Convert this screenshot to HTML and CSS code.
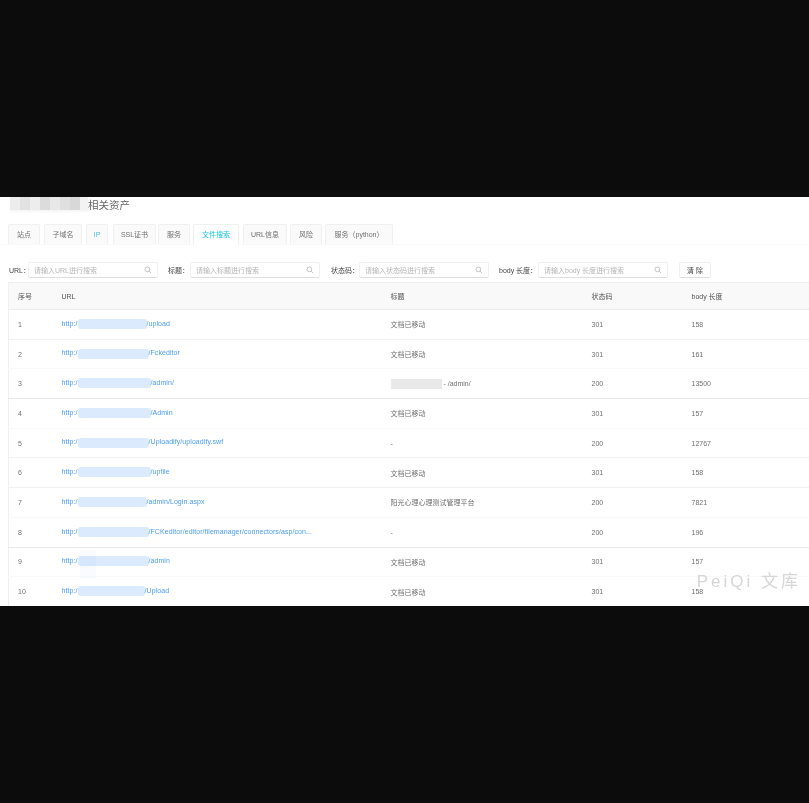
FILE: index.html
```html
<!DOCTYPE html>
<html lang="en">
<head>
    <meta charset="UTF-8">
    <meta name="viewport" content="width=device-width, initial-scale=1.0">
    <title>相关资产</title>
    <link rel="stylesheet" href="styles.css">
</head>
<body>
<div class="page">
    <div class="heading"><span class="mosaic"></span><h2>相关资产</h2></div>

    <div class="tabs">
        <a class="tab w1">站点</a>
        <a class="tab w2">子域名</a>
        <a class="tab w3 tinted">IP</a>
        <a class="tab w4">SSL证书</a>
        <a class="tab w5">服务</a>
        <a class="tab w6 active">文件搜索</a>
        <a class="tab w7">URL信息</a>
        <a class="tab w8">风险</a>
        <a class="tab w9">服务（python）</a>
    </div>

    <form class="filters">
        <label class="lbl-url">URL：</label>
        <div class="search"><input type="text" placeholder="请输入URL进行搜索"><svg viewBox="0 0 10 10"><circle cx="4.2" cy="4.2" r="3"/><path d="M6.4 6.4L9 9"/></svg></div>
        <label class="lbl-title">标题：</label>
        <div class="search"><input type="text" placeholder="请输入标题进行搜索"><svg viewBox="0 0 10 10"><circle cx="4.2" cy="4.2" r="3"/><path d="M6.4 6.4L9 9"/></svg></div>
        <label class="lbl-status">状态码：</label>
        <div class="search"><input type="text" placeholder="请输入状态码进行搜索"><svg viewBox="0 0 10 10"><circle cx="4.2" cy="4.2" r="3"/><path d="M6.4 6.4L9 9"/></svg></div>
        <label class="lbl-body">body 长度：</label>
        <div class="search"><input type="text" placeholder="请输入body 长度进行搜索"><svg viewBox="0 0 10 10"><circle cx="4.2" cy="4.2" r="3"/><path d="M6.4 6.4L9 9"/></svg></div>
        <button type="button">清 除</button>
    </form>

    <table class="assets">
        <colgroup>
            <col class="c-no"><col class="c-url"><col class="c-title"><col class="c-code"><col>
        </colgroup>
        <thead>
            <tr><th>序号</th><th>URL</th><th>标题</th><th>状态码</th><th>body 长度</th></tr>
        </thead>
        <tbody>
            <tr class="line-mid"><td>1</td><td class="link"><a>http:/<i class="blot b69"></i>/upload</a></td><td>文档已移动</td><td>301</td><td>158</td></tr>
            <tr class="line-faint"><td>2</td><td class="link"><a>http:/<i class="blot b71"></i>/Fckeditor</a></td><td>文档已移动</td><td>301</td><td>161</td></tr>
            <tr class="line-dark"><td>3</td><td class="link"><a>http:/<i class="blot b73"></i>/admin/</a></td><td><i class="blot grey"></i> - /admin/</td><td>200</td><td>13500</td></tr>
            <tr class="line-faint"><td>4</td><td class="link"><a>http:/<i class="blot b73"></i>/Admin</a></td><td>文档已移动</td><td>301</td><td>157</td></tr>
            <tr class="line-mid"><td>5</td><td class="link"><a>http:/<i class="blot b71"></i>/Uploadify/uploadify.swf</a></td><td>-</td><td>200</td><td>12767</td></tr>
            <tr class="line-mid"><td>6</td><td class="link"><a>http:/<i class="blot b73"></i>/upfile</a></td><td>文档已移动</td><td>301</td><td>158</td></tr>
            <tr class="line-faint"><td>7</td><td class="link"><a>http:/<i class="blot b69"></i>/admin/Login.aspx</a></td><td>阳光心理心理测试管理平台</td><td>200</td><td>7821</td></tr>
            <tr class="line-dark"><td>8</td><td class="link"><a>http:/<i class="blot b71"></i>/FCKeditor/editor/filemanager/connectors/asp/con...</a></td><td>-</td><td>200</td><td>196</td></tr>
            <tr class="line-faint"><td>9</td><td class="link"><a>http:/<i class="blot b71"></i>/admin</a></td><td>文档已移动</td><td>301</td><td>157</td></tr>
            <tr><td>10</td><td class="link"><a>http:/<i class="blot b67"></i>/Upload</a></td><td>文档已移动</td><td>301</td><td>158</td></tr>
        </tbody>
    </table>

    <div class="ghost"></div>
    <div class="watermark">PeiQi 文库</div>
</div>
</body>
</html>
```

FILE: styles.css
```css
body {
    margin: 0;
    height: 803px;
    background-color: #0c0c0c;
    overflow: hidden;
    font-family: "Liberation Sans", "Noto Sans CJK SC", sans-serif;
    font-size: 7px;
    color: #707070;
}

.page {
    position: relative;
    margin-top: 197px;
    height: 409px;
    background-color: #fff;
    overflow: hidden;
    filter: blur(0.4px);
}

.heading {
    display: flex;
    align-items: flex-start;
    height: 27px;
    padding-left: 10px;
}

.heading h2 {
    margin: 0;
    font-size: 10.5px;
    line-height: 16px;
    font-weight: normal;
    color: #666;
}

.mosaic {
    width: 78px;
    height: 13px;
    background: linear-gradient(90deg, #ececec 0 10px, #e2e2e2 10px 20px, #ededed 20px 30px, #dcdcdc 30px 40px, #e8e8e8 40px 50px, #e0e0e0 50px 60px, #d8d8d8 60px 70px, #f3f3f3 70px);
    box-shadow: 0 2px 2px #f6f6f6;
}

.tabs {
    display: flex;
    height: 20px;
    padding-left: 8px;
    border-bottom: 1px solid #f8f8f8;
}

.tab {
    box-sizing: border-box;
    height: 20px;
    line-height: 19px;
    text-align: center;
    background-color: #fafafa;
    border: 1px solid #f0f0f0;
    border-bottom: none;
    border-radius: 2px 2px 0 0;
}

.w1 { width: 32px; margin-right: 4px; }
.w2 { width: 38px; margin-right: 4px; }
.w3 { width: 22px; margin-right: 5px; }
.w4 { width: 43px; margin-right: 2px; }
.w5 { width: 32px; margin-right: 3px; }
.w6 { width: 46px; margin-right: 4px; }
.w7 { width: 44px; margin-right: 3px; }
.w8 { width: 32px; margin-right: 3px; }
.w9 { width: 68px; }

.tab.tinted { color: #4cc3d9; }

.tab.active {
    height: 21px;
    color: #19c5e0;
    background-color: #fff;
}

.filters {
    display: flex;
    align-items: center;
    height: 16px;
    margin-top: 17px;
    padding-left: 9px;
}

.filters label {
    color: #444;
    white-space: nowrap;
}

.lbl-url { width: 19px; }
.lbl-title { width: 22px; margin-left: 10px; }
.lbl-status { width: 28px; margin-left: 11px; }
.lbl-body { width: 39px; margin-left: 10px; }

.search {
    position: relative;
    box-sizing: border-box;
    width: 130px;
    height: 16px;
    border: 1px solid #f0f0f0;
    border-bottom-color: #dedede;
    border-radius: 2px;
}

.search input {
    width: 100%;
    height: 100%;
    box-sizing: border-box;
    padding: 0 18px 0 5px;
    border: none;
    outline: none;
    background: transparent;
    font: inherit;
}

.search input::placeholder {
    color: #b5b5b5;
}

.search svg {
    position: absolute;
    top: 3px;
    right: 5px;
    width: 8px;
    height: 8px;
    fill: none;
    stroke: #b5b5b5;
    stroke-width: 1;
}

.filters button {
    box-sizing: border-box;
    width: 32px;
    height: 16px;
    margin-left: 11px;
    padding: 0;
    border: 1px solid #f0f0f0;
    border-bottom-color: #dedede;
    border-radius: 2px;
    background-color: #fff;
    color: #444;
    font: inherit;
}

.assets {
    width: 801px;
    margin: 4px 0 0 8px;
    border-collapse: collapse;
    table-layout: fixed;
    border-left: 1px solid #f0f0f0;
}

.c-no { width: 44px; }
.c-url { width: 329px; }
.c-title { width: 201px; }
.c-code { width: 100px; }

.assets th,
.assets td {
    box-sizing: border-box;
    padding: 0 0 0 9px;
    text-align: left;
    font-weight: normal;
    white-space: nowrap;
}

.assets th {
    height: 27px;
    background-color: #f9f9f9;
    border-top: 1px solid #eeeeee;
    border-bottom: 1px solid #ececec;
    color: #555;
}

.assets td {
    height: 29.7px;
}

.assets td.link {
    padding-bottom: 1px;
}

.assets a {
    color: #4a9bf3;
    letter-spacing: 0.07px;
}

.line-faint td { border-bottom: 1px solid #f9f9f9; }
.line-mid td { border-bottom: 1px solid #f1f1f1; }
.line-dark td { border-bottom: 1px solid #e8e8e8; }

.blot {
    display: inline-block;
    height: 10px;
    vertical-align: middle;
    background-color: #dbebfd;
    border-radius: 3px;
    box-shadow: 0 0 1px #e9f2fe;
}

.b67 { width: 67px; }
.b69 { width: 69px; }
.b71 { width: 71px; }
.b73 { width: 73px; }

.blot.grey {
    width: 51px;
    background-color: #e8e8e8;
    border-radius: 0;
    box-shadow: none;
}

.ghost {
    position: absolute;
    left: 80px;
    top: 354px;
    width: 16px;
    height: 28px;
    background-color: #f9fbff;
    mix-blend-mode: multiply;
}

.watermark {
    position: absolute;
    right: 8px;
    bottom: 14px;
    font-size: 17px;
    letter-spacing: 3px;
    color: #d6d6d6;
    white-space: nowrap;
}
```
